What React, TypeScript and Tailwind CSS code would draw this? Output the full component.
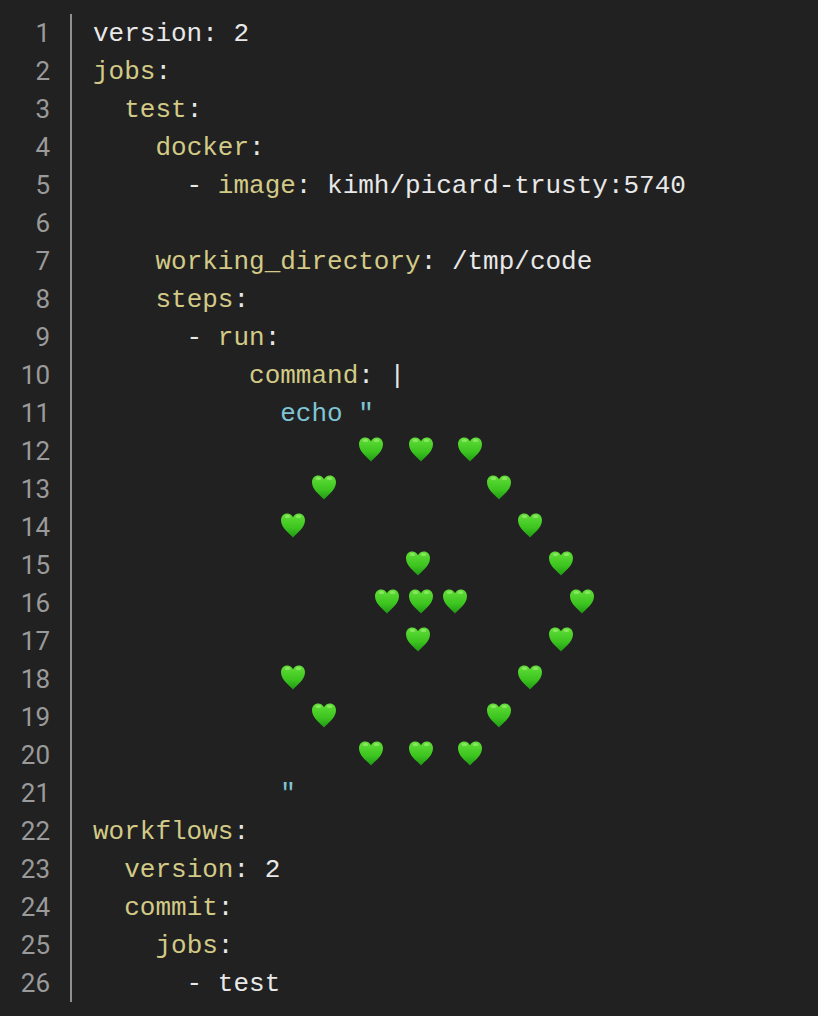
const HEART_ROWS: Record<number, number[]> = {
  12: [371, 421, 470],
  13: [324, 499],
  14: [293, 530],
  15: [418, 561],
  16: [387, 421, 455, 582],
  17: [418, 561],
  18: [293, 530],
  19: [324, 499],
  20: [371, 421, 470],
};

function Heart({ x }: { x: number }) {
  return (
    <svg className="absolute top-[5px]" style={{ left: x - 93 - 12 }} width="24" height="25" viewBox="0 0 24 25">
      <defs>
        <linearGradient id="h" x1="0" y1="0" x2="0" y2="1">
          <stop offset="0" stopColor="#62de38" />
          <stop offset="0.6" stopColor="#3cc41f" />
          <stop offset="1" stopColor="#1f9a14" />
        </linearGradient>
      </defs>
      <path d="M12 24.500C9.800 21.500 0 15.500 0 7.300 0 3.200 2.800 0.500 6.200 0.500c2.600 0 4.700 1.500 5.800 3.700C13.100 2 15.200 0.500 17.800 0.500 21.200 0.500 24 3.200 24 7.300 24 15.500 14.200 21.500 12 24.500z" fill="url(#h)" />
      <ellipse cx="6.500" cy="3.600" rx="2.800" ry="1.500" fill="#9bee70" opacity="0.7" />
      <ellipse cx="17.500" cy="3.600" rx="2.800" ry="1.500" fill="#9bee70" opacity="0.7" />
    </svg>
  );
}

function Line({ n, children }: { n: number; children?: React.ReactNode }) {
  return (
    <div className="flex h-[38px] leading-[38px]">
      <div className="w-[50px] shrink-0 text-right font-['Roboto',sans-serif] text-[#9a9a9a]">{n}</div>
      <div className="mr-[21px] ml-[20px] w-[2px] shrink-0 bg-[#8f8f8f]" />
      <div className="relative flex-1 whitespace-pre leading-[40px]">
        {children}
        {HEART_ROWS[n]?.map((x) => <Heart key={x} x={x} />)}
      </div>
    </div>
  );
}

const K = ({ children }: { children: React.ReactNode }) => <span className="text-[#d2ca86]">{children}</span>;
const C = ({ children }: { children: React.ReactNode }) => <span className="text-[#7fc4d4]">{children}</span>;

export default function App() {
  return (
    <div className="h-[1016px] w-[818px] overflow-hidden bg-[#212121] pt-[14px] font-['Liberation_Mono',monospace] text-[26px] text-[#e8e8e8]">
      <Line n={1}>version: 2</Line>
      <Line n={2}><K>jobs</K>:</Line>
      <Line n={3}>{"  "}<K>test</K>:</Line>
      <Line n={4}>{"    "}<K>docker</K>:</Line>
      <Line n={5}>{"      - "}<K>image</K>: kimh/picard-trusty:5740</Line>
      <Line n={6} />
      <Line n={7}>{"    "}<K>working_directory</K>: /tmp/code</Line>
      <Line n={8}>{"    "}<K>steps</K>:</Line>
      <Line n={9}>{"      - "}<K>run</K>:</Line>
      <Line n={10}>{"          "}<K>command</K>: |</Line>
      <Line n={11}>{"            "}<C>echo "</C></Line>
      {[12, 13, 14, 15, 16, 17, 18, 19, 20].map((n) => <Line key={n} n={n} />)}
      <Line n={21}>{"            "}<C>"</C></Line>
      <Line n={22}><K>workflows</K>:</Line>
      <Line n={23}>{"  "}<K>version</K>: 2</Line>
      <Line n={24}>{"  "}<K>commit</K>:</Line>
      <Line n={25}>{"    "}<K>jobs</K>:</Line>
      <Line n={26}>{"      - "}test</Line>
    </div>
  );
}
